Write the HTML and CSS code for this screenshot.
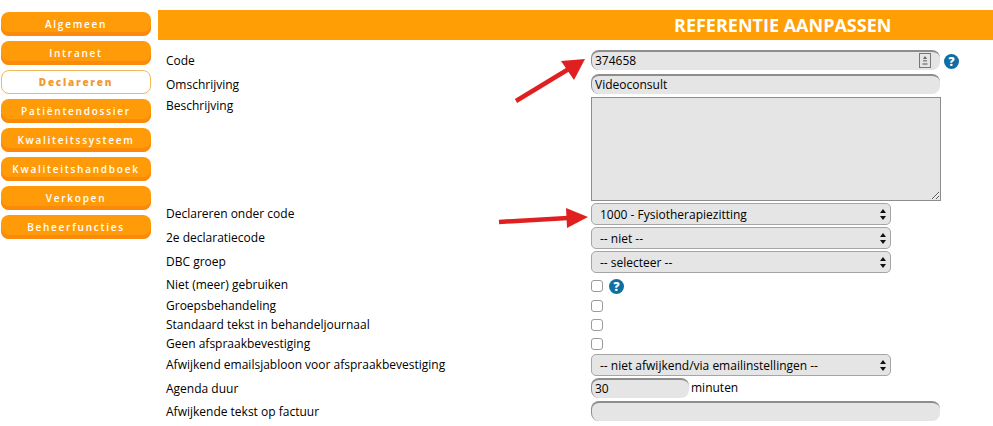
FILE: index.html
```html
<!DOCTYPE html>
<html lang="nl">
<head>
    <meta charset="UTF-8">
    <meta name="viewport" content="width=device-width, initial-scale=1.0">
    <title>Referentie aanpassen</title>
    <link rel="stylesheet" href="styles.css">
</head>
<body>
    <nav class="menu">
        <a class="menu-item" href="#">Algemeen</a>
        <a class="menu-item" href="#">Intranet</a>
        <a class="menu-item active" href="#">Declareren</a>
        <a class="menu-item" href="#">Patiëntendossier</a>
        <a class="menu-item" href="#">Kwaliteitssysteem</a>
        <a class="menu-item" href="#">Kwaliteitshandboek</a>
        <a class="menu-item" href="#">Verkopen</a>
        <a class="menu-item" href="#">Beheerfuncties</a>
    </nav>

    <main class="content">
        <h1 class="title">REFERENTIE AANPASSEN</h1>
        <form class="form">
            <div class="row row-code">
                <label>Code</label>
                <div class="field">
                    <div class="input-wrap">
                        <input class="text wide" type="text" value="374658">
                        <svg class="contact-icon" width="12" height="15" viewBox="0 0 12 15">
                            <rect x="0.5" y="0.5" width="11" height="14" fill="#e4e4e4" stroke="#777"/>
                            <path d="M6 3 L8 6 H4 Z" fill="#666"/>
                            <rect x="4" y="7" width="4" height="1.5" fill="#888"/>
                            <rect x="3.5" y="10" width="5" height="2" fill="#999"/>
                        </svg>
                    </div>
                    <span class="help">?</span>
                </div>
            </div>
            <div class="row row-text">
                <label>Omschrijving</label>
                <div class="field"><input class="text wide" type="text" value="Videoconsult"></div>
            </div>
            <div class="row row-area">
                <label>Beschrijving</label>
                <div class="field"><textarea class="area"></textarea></div>
            </div>
            <div class="row row-select">
                <label>Declareren onder code</label>
                <div class="field"><select><option>1000 - Fysiotherapiezitting</option></select></div>
            </div>
            <div class="row row-select">
                <label>2e declaratiecode</label>
                <div class="field"><select><option>-- niet --</option></select></div>
            </div>
            <div class="row row-select">
                <label>DBC groep</label>
                <div class="field"><select><option>-- selecteer --</option></select></div>
            </div>
            <div class="row row-check first-check">
                <label>Niet (meer) gebruiken</label>
                <div class="field"><input type="checkbox"><span class="help">?</span></div>
            </div>
            <div class="row row-check">
                <label>Groepsbehandeling</label>
                <div class="field"><input type="checkbox"></div>
            </div>
            <div class="row row-check">
                <label>Standaard tekst in behandeljournaal</label>
                <div class="field"><input type="checkbox"></div>
            </div>
            <div class="row row-check">
                <label>Geen afspraakbevestiging</label>
                <div class="field"><input type="checkbox"></div>
            </div>
            <div class="row row-select">
                <label>Afwijkend emailsjabloon voor afspraakbevestiging</label>
                <div class="field"><select><option>-- niet afwijkend/via emailinstellingen --</option></select></div>
            </div>
            <div class="row row-text row-duration">
                <label>Agenda duur</label>
                <div class="field"><input class="text short" type="text" value="30"><span class="unit">minuten</span></div>
            </div>
            <div class="row row-text">
                <label>Afwijkende tekst op factuur</label>
                <div class="field"><input class="text wide" type="text"></div>
            </div>
        </form>
    </main>

    <!-- annotation arrows on top of the form -->
    <svg class="arrow arrow-one" width="74" height="50" viewBox="0 0 74 50">
        <path d="M2 45 L58 11" stroke="#e02020" stroke-width="4.5" fill="none"/>
        <path d="M71 3 L47 5 L60 24 Z" fill="#e02020"/>
    </svg>
    <svg class="arrow arrow-two" width="92" height="24" viewBox="0 0 92 24">
        <path d="M1 15 L70 11" stroke="#e02020" stroke-width="4.5" fill="none"/>
        <path d="M90 10 L68 1 L69 21 Z" fill="#e02020"/>
    </svg>
</body>
</html>
```

FILE: styles.css
```css
* {
    margin: 0;
    padding: 0;
    box-sizing: border-box;
    font-family: "Open Sans", sans-serif;
}

html, body {
    height: 100%;
    overflow: hidden;
}

body {
    display: flex;
    align-items: flex-start;
    gap: 7px;
    padding: 10px 0 0 1px;
    background: #ffffff;
    color: #000000;
    font-size: 12px;
}

.menu {
    width: 150px;
    flex-shrink: 0;
    display: flex;
    flex-direction: column;
    gap: 5px;
    padding-top: 2px;
}

.menu-item {
    display: block;
    height: 24px;
    line-height: 24px;
    border-radius: 8px;
    background: #ff9b08;
    box-shadow: inset 0 -4px 0 #fb8a0a;
    color: #ffffff;
    font-size: 10px;
    font-weight: 600;
    letter-spacing: 1.75px;
    text-align: center;
    text-decoration: none;
    white-space: nowrap;
}

.menu-item.active {
    background: #ffffff;
    box-shadow: none;
    border: 1px solid #f4b75a;
    line-height: 22px;
    color: #f29a2e;
    font-weight: 800;
}

.content {
    flex: 1;
}

.title {
    height: 30px;
    line-height: 31px;
    padding-left: 516px;
    background: #ff9e05;
    color: #ffffff;
    font-size: 18px;
    font-weight: 700;
}

.form {
    padding: 10px 0 0 8px;
}

.row {
    display: grid;
    grid-template-columns: 425px 1fr;
}

.row label {
    line-height: 22px;
    white-space: nowrap;
}

.field {
    display: flex;
    align-items: flex-start;
}

.row-code,
.row-text {
    height: 24px;
}

.row-duration {
    height: 23px;
}

.row-area {
    height: 106px;
    margin-top: -1px;
}

.row-area label {
    line-height: 18px;
}

.row-select {
    height: 24px;
}

.row-check {
    height: 19px;
}

.row-check label {
    line-height: 17px;
}

.first-check {
    height: 22px;
}

.first-check label {
    line-height: 19px;
}

.first-check .field {
    padding-top: 2px;
}

.text {
    height: 20px;
    padding: 0 2px 2px 3px;
    border: none;
    border-top: 2px solid #8d8d8d;
    border-left: 1px solid #8d8d8d;
    border-radius: 8px;
    background: #e5e5e5;
    color: #000000;
    font-size: 12px;
    outline: none;
}

.wide {
    width: 349px;
}

.short {
    width: 98px;
}

.input-wrap {
    position: relative;
    height: 20px;
}

.contact-icon {
    position: absolute;
    top: 3px;
    right: 9px;
}

.area {
    display: block;
    width: 350px;
    height: 104px;
    border: 1px solid #8d8d8d;
    background: #e5e5e5;
    outline: none;
}

select {
    width: 300px;
    height: 22px;
    padding-left: 8px;
    appearance: none;
    border: 1px solid #a5a5a5;
    border-radius: 5px;
    background: #e5e5e5 url("data:image/svg+xml,%3Csvg xmlns='http://www.w3.org/2000/svg' width='6' height='11' viewBox='0 0 6 11'%3E%3Cpath d='M3 0 L6 4 H0 Z M3 11 L0 7 H6 Z' fill='%23111'/%3E%3C/svg%3E") no-repeat right 4px center;
    color: #000000;
    font-size: 12px;
}

input[type="checkbox"] {
    width: 12px;
    height: 12px;
    margin-top: 3px;
    appearance: none;
    border: 1px solid #9a9a9a;
    border-radius: 3px;
    background: #ffffff;
}

.help {
    width: 15px;
    height: 15px;
    margin: 2px 0 0 6px;
    border-radius: 50%;
    background: #0f6fa3;
    color: #ffffff;
    font-size: 12px;
    font-weight: 800;
    line-height: 15px;
    text-align: center;
}

.row-code .help {
    margin: 4px 0 0 4px;
}

.unit {
    margin-left: 2px;
    line-height: 20px;
}

.arrow {
    position: absolute;
}

.arrow-one {
    left: 514px;
    top: 56px;
}

.arrow-two {
    left: 498px;
    top: 207px;
}
```
